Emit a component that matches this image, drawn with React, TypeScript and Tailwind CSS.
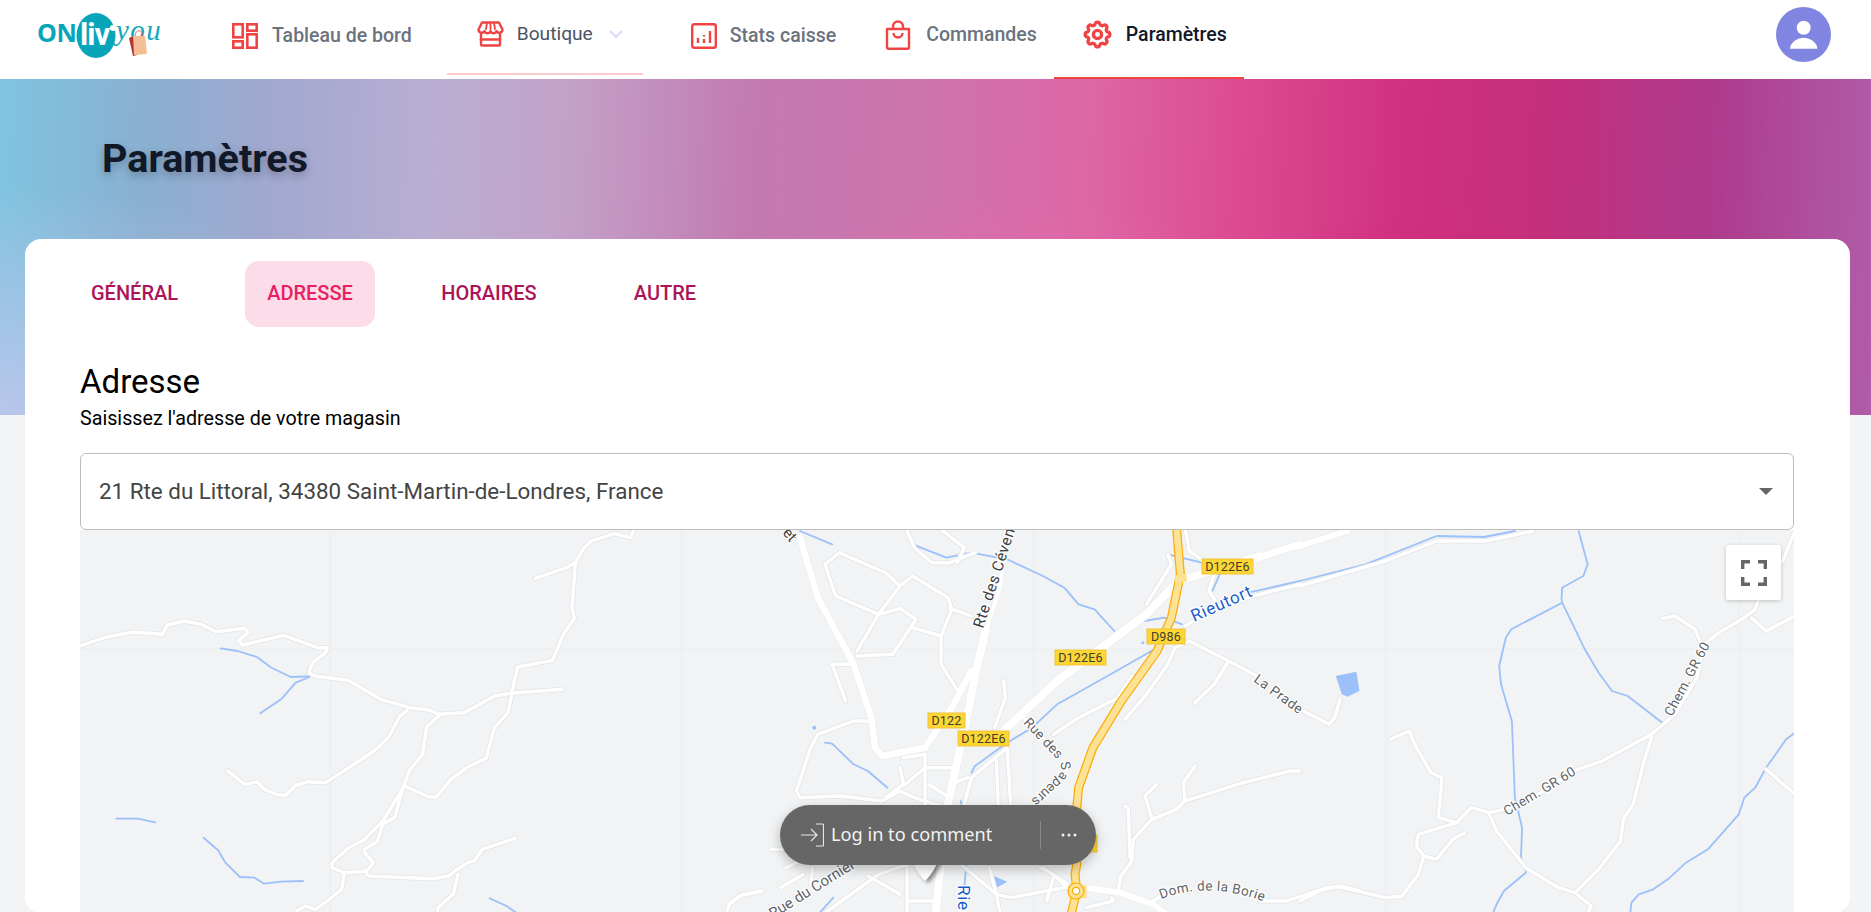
import React from "react";
import { HiOutlineCog } from "react-icons/hi";

type Pts = string;
const conv = (s: Pts, ox: number, oy: number, sx: number, sy: number) =>
  s.trim().split(/\s+/).map((p) => {
    const [x, y] = p.split(",").map(Number);
    return `${(ox + x / sx - 80).toFixed(1)},${(oy + y / sy - 529).toFixed(1)}`;
  }).join(" ");
const z8 = (s: Pts) => conv(s, 0, 520, 2.063, 3);
const z5 = (s: Pts) => conv(s, 700, 520, 2.8, 3);
const z6 = (s: Pts) => conv(s, 1000, 520, 3, 3);
const z7 = (s: Pts) => conv(s, 1300, 520, 2.746, 3);
const z11 = (s: Pts) => conv(s, 1040, 700, 3, 3);
const z12 = (s: Pts) => conv(s, 770, 790, 3, 3);

const thin: string[] = [
  ...[
    "165,375 215,350 275,333 335,340 345,312 380,300 415,310 445,332 505,322 512,335 492,358 500,372 550,355 585,343 655,380 675,380 672,395 645,425 637,455 650,465 718,478 785,535 845,560 885,567 905,580 958,575 1020,525 1055,517 1160,505",
    "1055,517 1068,438 1140,418 1162,340 1185,292 1180,260 1187,125 1205,80 1220,60 1268,38 1300,50 1307,30",
    "1187,125 1168,140 1105,172",
    "905,585 880,618 872,700 845,748 830,805 815,888 790,910 778,962 752,985 752,995 770,1025 755,1052 760,1065 895,1073 925,1065 940,1048 965,1025 980,1018 995,985 1063,952",
    "1055,525 1048,575 1020,620 1003,712 965,738 930,775 900,828 885,828 835,795",
    "840,568 825,585 802,648 772,690 672,785 635,782 610,793 590,822 575,822 545,805 530,782 505,790 470,750",
    "830,805 790,900 750,958 718,982 685,1025 685,1040 710,1055 755,1050",
    "710,1060 705,1105 680,1135 650,1165 630,1155 612,1170",
    "945,1060 935,1120 903,1160 903,1180",
    "1500,1170 1505,1150 1530,1122 1568,1110",
  ].map(z8),
  ...[
    "350,130 390,95 520,155 560,195 595,165 695,230 705,265 675,345 675,430 725,515",
    "560,195 500,280 440,390",
    "350,130 380,225 500,280 560,262 605,295 540,400 440,405",
    "595,320 675,345",
    "700,262 760,285",
    "370,430 430,430",
    "370,430 408,540",
    "480,600 430,600 330,640 310,680 270,810 280,830 390,825 510,840 560,810 600,830 690,860",
    "560,740 570,790 520,830",
    "630,740 720,740",
    "570,710 630,700 630,850",
    "575,790 630,740",
    "640,790 700,830",
    "700,790 750,770",
    "740,850 760,770 860,680 870,850",
    "830,720 835,850",
    "850,480 855,530 825,620",
    "905,590 960,650",
    "990,640 1060,590 1170,530 1210,465",
    "1190,595 1250,520 1310,430 1330,380 1370,360 1480,420 1560,465",
    "1480,420 1440,490 1385,545",
    "1250,250 1320,130 1310,100",
    "1360,30 1370,90 1405,115",
    "1440,160 1425,210 1450,250",
    "580,30 600,80 650,125 700,125 770,95",
    "680,30 740,80 720,125",
    "850,100 855,30",
    "80,1150 110,1125 175,1110",
    "225,1100 290,1060",
    "240,1040 320,1000",
    "315,1040 310,1090",
    "350,1176 500,1060 580,1030",
    "470,1065 560,1120",
    "580,1030 580,1176",
    "580,1140 660,1140",
    "730,1030 830,1120 870,1130 1020,1100",
    "830,1120 840,1176",
    "810,1040 830,1120",
    "960,1040 1030,1090",
    "200,985 230,985",
  ].map(z5),
  ...[
    "1110,370 1150,335 1220,290 1250,265 1270,200 1325,120 1359,30",
    "1240,290 1280,330 1359,285",
    "1100,365 1085,325 1030,285 995,293",
    "1110,370 1090,470 1030,580 965,640 830,720 750,750 640,830 560,865 520,875 470,860 430,905 325,940 320,975 340,1005 325,1060 280,1125 235,1130 105,1097 70,1100 0,1140",
    "965,650 945,720 915,850 888,895 880,960 820,1045 760,1110",
    "520,880 540,930 620,1040 710,1100 755,1115 800,1155 790,1176",
    "1280,745 1359,820",
    "340,1005 375,1015 420,955 452,935",
    "430,905 380,890 390,770 360,755 315,670 300,630 248,655",
    "0,565 80,610 95,590 110,535",
    "0,195 235,120 375,60 510,60 640,30",
  ].map(z7),
  ...[
    "335,350 315,285 350,250",
    "435,300 430,245 465,195",
    "270,470 265,320 255,315",
    "235,570 240,530 275,480 280,415 335,355 410,325 435,300 610,245 750,210 780,210",
    "340,600 380,575",
    "660,600 740,600 830,570 900,555 960,570",
    "0,500 40,520 80,560",
    "40,530 20,600",
    "140,620 220,600 215,590",
  ].map(z11),
  z6("555,315 640,265 760,225 900,190"),
];

const thick: [string, number][] = [
  [z5("800,330 775,440 745,600 690,870 660,1176"), 8],
  [z5("800,330 840,200 850,100"), 4],
  [z5("280,50 330,230 430,430 480,590 490,680 510,705 630,680 700,570 760,450"), 6.5],
  [z5("830,650 1000,480 1250,280 1340,180 1430,150 1568,105"), 8],
  [z6("760,115 900,70"), 7],
  [z7("0,75 130,30"), 6],
  [z11("140,560 240,575 340,610 380,640"), 6],
];

const rivers: string[] = [
  ...[
    "455,382 490,390 530,408 560,440 600,468 638,466",
    "638,468 610,485 580,535 537,577",
    "240,893 285,893 320,904",
    "420,950 450,988 465,1025 495,1068 525,1070 545,1088 580,1082 625,1080",
    "1010,1132 1045,1155 1065,1175",
  ].map(z8),
  ...[
    "280,30 370,70",
    "595,70 690,110 760,95 860,115 960,165 1020,200 1060,250 1105,265 1160,330",
    "1280,380 1150,460 1000,550 930,620 860,665 770,735 760,755",
    "350,665 370,668 430,730 470,750 525,800",
    "1245,300 1300,290 1350,310",
    "1310,100 1405,125",
    "1455,160 1435,210",
    "1360,310 1440,260 1568,215",
    "730,840 735,860",
    "745,1035 740,1100",
  ].map(z5),
  z6("745,215 900,180"),
  ...[
    "0,180 180,130 375,45 505,48 590,30",
    "765,30 790,130 778,165 720,200 718,235 720,245 580,325 565,350 547,435 552,490 582,600 590,830 610,920 607,1010 620,1050",
    "620,1055 560,1110 540,1150 530,1176",
    "720,245 780,380 820,455 857,510 900,525 995,605",
    "1359,635 1335,655 1280,740 1250,800 1220,830 1205,880 1120,985 1060,1025 1010,1075 970,1105 930,1120 910,1145 907,1176",
  ].map(z7),
  z12("190,320 140,375"),
];

const hx = (x: number) => x - 80;
const hy = (y: number) => y - 529;
const Shield = ({ x, y, w, t }: { x: number; y: number; w: number; t: string }) => (
  <g>
    <rect x={hx(x)} y={hy(y)} width={w} height={15} fill="#fdd633" stroke="#f0c33c" strokeWidth={1} />
    <text x={hx(x) + w / 2} y={hy(y) + 12} textAnchor="middle" fontSize={12.5} fill="#3c3c32" letterSpacing={0.2}>{t}</text>
  </g>
);
const halo = { paintOrder: "stroke" as const, stroke: "#ffffff", strokeWidth: 2.5, strokeLinejoin: "round" as const };
const pt = (s: string) => s.split(",").map(Number);

const MapDrawing = () => (
  <svg width={1714} height={383} viewBox="0 0 1714 383" className="block" style={{ fontFamily: "Roboto, sans-serif" }}>
    <rect width={1714} height={383} fill="#f1f3f4" />
    {[250.6, 602, 954, 1306, 1659].map((x) => (
      <line key={x} x1={x} x2={x} y1={0} y2={383} stroke="#ecedef" strokeWidth={1} />
    ))}
    <line x1={0} x2={1714} y1={119} y2={119} stroke="#ecedef" strokeWidth={1} />
    <polygon points={z7("98,465 155,452 163,510 130,527 115,520")} fill="#9cc0f9" />
    <circle cx={pt(z5("320,620"))[0]} cy={pt(z5("320,620"))[1]} r={2} fill="#9cc0f9" />
    <circle cx={pt(z5("1240,365"))[0]} cy={pt(z5("1240,365"))[1]} r={1.5} fill="#9cc0f9" />
    <polygon points={z12("672,255 712,272 680,290")} fill="#9cc0f9" />
    <g fill="none" strokeLinejoin="round" strokeLinecap="round">
      {rivers.map((p, i) => <polyline key={i} points={p} stroke="#9cc0f9" strokeWidth={1.8} />)}
      {thin.map((p, i) => <polyline key={i} points={p} stroke="#e3e5e8" strokeWidth={5} />)}
      {thick.map(([p, w], i) => <polyline key={i} points={p} stroke="#e8eaed" strokeWidth={w + 1} />)}
      {thin.map((p, i) => <polyline key={i} points={p} stroke="#ffffff" strokeWidth={3.4} />)}
      {thick.map(([p, w], i) => <polyline key={i} points={p} stroke="#ffffff" strokeWidth={w} />)}
      <polyline points={z5("1335,30 1345,160 1320,290 1280,390 1180,540 1100,680 1060,800 1055,860 1055,1030 1050,1060 1055,1110 1040,1176")} stroke="#f9ab00" strokeWidth={9} />
      <polyline points={z5("1335,30 1345,160 1320,290 1280,390 1180,540 1100,680 1060,800 1055,860 1055,1030 1050,1060 1055,1110 1040,1176")} stroke="#fde293" strokeWidth={6.6} />
      <polyline points={z6("525,175 560,170")} stroke="#fde293" strokeWidth={8} strokeLinecap="butt" />
      <polyline points={z11("85,572 140,572")} stroke="#fde293" strokeWidth={13} strokeLinecap="butt" />
      <circle cx={hx(1076)} cy={hy(890)} r={8} fill="#fde293" stroke="#f9ab00" strokeWidth={1.2} />
      <circle cx={hx(1076)} cy={hy(890)} r={3.6} fill="#ffffff" stroke="#f9ab00" strokeWidth={1.2} />
    </g>
    <text transform={`translate(${hx(782)} ${hy(532)}) rotate(50)`} fontSize={15} fill="#3c4043" style={halo}>et</text>
    <text transform={`translate(${hx(983)} ${hy(628)}) rotate(-72)`} fontSize={15.5} fill="#3c4043" style={halo} letterSpacing={0.5}>Rte des Cévennes</text>
    <text transform={`translate(${hx(1194)} ${hy(621)}) rotate(-24)`} fontSize={17} fill="#1a5cc8" style={halo} letterSpacing={0.7}>Rieutort</text>
    <text transform={`translate(${hx(958)} ${hy(884)}) rotate(90)`} fontSize={17} fill="#1a5cc8" style={halo} letterSpacing={0.7}>Rieutort</text>
    <text transform={`translate(${hx(1253)} ${hy(680)}) rotate(36)`} fontSize={13.5} fill="#5f6368" style={halo} letterSpacing={0.5}>La Prade</text>
    <text transform={`translate(${hx(1507)} ${hy(815)}) rotate(-31)`} fontSize={13.5} fill="#5f6368" style={halo} letterSpacing={0.3}>Chem. GR 60</text>
    <text transform={`translate(${hx(1672)} ${hy(716)}) rotate(-62)`} fontSize={13.5} fill="#5f6368" style={halo} letterSpacing={0.3}>Chem. GR 60</text>
    <text transform={`translate(${hx(856)} ${hy(866)}) rotate(-32)`} textAnchor="end" fontSize={15} fill="#5f6368" style={halo}>Rue du Cornier</text>
    <defs>
      <path id="borie" d={`M${hx(1161)} ${hy(898)} Q${hx(1212)} ${hy(878)} ${hx(1275)} ${hy(905)}`} />
      <path id="sapeurs" d={`M${hx(1023)} ${hy(722)} L${hx(1056)} ${hy(757)} Q${hx(1068)} ${hy(770)} ${hx(1052)} ${hy(780)} L${hx(1022)} ${hy(808)}`} />
    </defs>
    <text fontSize={13.5} fill="#5f6368" style={halo} letterSpacing={0.4}><textPath href="#borie">Dom. de la Borie</textPath></text>
    <text fontSize={13.5} fill="#5f6368" style={halo} letterSpacing={0.3}><textPath href="#sapeurs">Rue des Sapeurs</textPath></text>
    <Shield x={1202} y={558} w={51} t="D122E6" />
    <Shield x={1055} y={649} w={51} t="D122E6" />
    <Shield x={958} y={730} w={51} t="D122E6" />
    <Shield x={928} y={712} w={37} t="D122" />
    <Shield x={1147} y={628} w={38} t="D986" />
    <rect x={hx(1085)} y={hy(834)} width={12} height={17} fill="#fdd633" stroke="#f0c33c" />
    <path d={`M${hx(906)} ${hy(845)} L${hx(944)} ${hy(845)} Q${hx(936)} ${hy(870)} ${hx(925)} ${hy(880)} Q${hx(914)} ${hy(870)} ${hx(906)} ${hy(845)} Z`} fill="#ffffff" style={{ filter: "drop-shadow(3px 2px 2px rgba(0,0,0,0.45))" }} />
  </svg>
);

const ICON = "#ef4444";
const IDash = () => (
  <svg width="26" height="26" viewBox="0 0 26 26" fill="none" stroke={ICON} strokeWidth="2.6">
    <rect x="1.3" y="1.3" width="9.4" height="13" /><rect x="15.3" y="1.3" width="9.4" height="6.4" />
    <rect x="1.3" y="18.3" width="9.4" height="6.4" /><rect x="15.3" y="11.3" width="9.4" height="13.4" />
  </svg>
);
const IStore = () => (
  <svg width="27" height="26" viewBox="0 0 27 26" fill="none" stroke={ICON} strokeWidth="2.4" strokeLinejoin="round" strokeLinecap="round">
    <path d="M4 13v10.500a1 1 0 0 0 1 1h17a1 1 0 0 0 1-1V13" />
    <path d="M5 1.500h17l3.500 7a3.200 3.200 0 0 1-6 1.600 3.200 3.200 0 0 1-6 0 3.200 3.200 0 0 1-6 0 3.200 3.200 0 0 1-6-1.600z" />
    <path d="M10 2l-1 6M17 2l1 6M13.500 2v6" strokeWidth="1.8" />
    <path d="M4 18.500h19" />
  </svg>
);
const IStats = () => (
  <svg width="26" height="26" viewBox="0 0 26 26" fill="none" stroke={ICON} strokeWidth="2.4">
    <rect x="1.2" y="1.2" width="23.6" height="23.6" rx="2" />
    <path d="M7 15v5M13 12v1.500M13 16v4M19 8v12" strokeWidth="2.4" />
  </svg>
);
const IBag = () => (
  <svg width="26" height="30" viewBox="0 0 26 30" fill="none" stroke={ICON} strokeWidth="2.4" strokeLinejoin="round">
    <path d="M2 9h22v18.500a1.200 1.200 0 0 1-1.200 1.200H3.200A1.200 1.200 0 0 1 2 27.500z" />
    <path d="M8 9V6.500a5 5 0 0 1 10 0V9" />
    <path d="M8.500 13a4.500 4.500 0 0 0 9 0" />
  </svg>
);
const IUser = () => (
  <svg width="55" height="55" viewBox="0 0 55 55">
    <circle cx="27.5" cy="27.5" r="27.5" fill="#7f85e0" />
    <circle cx="27.7" cy="20.7" r="7" fill="#ffffff" />
    <path d="M14 41.700c0-6.500 8-11 13.700-11s13.700 4.500 13.700 11z" fill="#ffffff" />
  </svg>
);
const Logo = () => (
  <svg width="135" height="58" viewBox="0 0 135 58" style={{ fontFamily: "'Open Sans', sans-serif" }}>
    <ellipse cx="61" cy="27.500" rx="19.500" ry="22.500" fill="#08a5ba" />
    <text x="2" y="33.500" fontSize="25" fontWeight="700" fill="#08a5ba" letterSpacing="-0.5">ON</text>
    <text x="45" y="37" fontSize="31" fontWeight="700" fill="#ffffff" letterSpacing="-1" style={{ fontFamily: "'Roboto', sans-serif" }}>liv</text>
    <circle cx="78" cy="20" r="3" fill="#ffffff" />
    <text x="81" y="32" fontSize="29" fontStyle="italic" fill="#12a9bb" letterSpacing="1.5" style={{ fontFamily: "'Liberation Serif', serif" }}>you</text>
    <path d="M94 30l5-2 3 19-4 1z" fill="#b3312f" />
    <path d="M98 28h12l2 18-13 1z" fill="#f5bd93" />
    <path d="M100 28c0-7 8-7 8 0" fill="none" stroke="#e8697a" strokeWidth="1" />
  </svg>
);

const navText = "text-[19.5px] font-medium leading-none";

export default function App() {
  return (
    <div className="h-[912px] overflow-hidden bg-[#f3f4f6] font-['Roboto',sans-serif]">
      <header className="h-[79px] bg-white flex items-start">
        <div className="w-[202px] pl-[35px] pt-[8px] shrink-0"><Logo /></div>
        <a className="h-[79px] pl-[30px] pr-[17px] flex items-center gap-[14px] text-[#6b7280] pb-[8px]">
          <IDash /><span className={navText}>Tableau de bord</span>
        </a>
        <a className="h-[75px] mx-[18px] pl-[30px] pr-[20px] flex items-center gap-[13px] text-[#4b5563] border-b-2 border-[#fecaca] pb-[6px]">
          <IStore /><span className="text-[19.2px] leading-none">Boutique</span>
          <svg width="14" height="8" viewBox="0 0 14 8" fill="none" stroke="#ddd6fe" strokeWidth="2" className="ml-[3px]"><path d="M1 1l6 6 6-6" /></svg>
        </a>
        <a className="h-[79px] pl-[30px] pr-[19px] flex items-center gap-[13px] text-[#6b7280] pb-[8px]">
          <IStats /><span className={navText}>Stats caisse</span>
        </a>
        <a className="h-[79px] pl-[30px] pr-[17px] flex items-center gap-[15px] text-[#6b7280] pb-[9px]">
          <IBag /><span className={navText}>Commandes</span>
        </a>
        <a className="h-[79px] pl-[27px] pr-[17px] flex items-center gap-[12px] text-[#111827] border-b-2 border-[#ef4444] pb-[8px]">
          <HiOutlineCog size={33} color={ICON} strokeWidth={2.4} /><span className={navText}>Paramètres</span>
        </a>
        <div className="ml-auto mr-[40px] mt-[7px]"><IUser /></div>
      </header>

      <section className="h-[336px] pl-[102px] pt-[55px] bg-[radial-gradient(ellipse_420px_230px_at_0%_100%,#b9c6ea_0%,rgba(185,198,234,0)_100%),radial-gradient(ellipse_300px_170px_at_54%_85%,rgba(230,108,170,0.85)_0%,rgba(230,108,170,0)_100%),radial-gradient(ellipse_220px_180px_at_77%_90%,rgba(205,45,115,0.8)_0%,rgba(205,45,115,0)_100%),linear-gradient(92deg,#7fc4e1_0%,#8aafd0_8%,#a3a8cf_15%,#b9aed2_23%,#c3a2c9_30%,#c27ab0_40%,#cf73ae_50%,#dd66a6_58%,#dc4a92_66%,#d03080_75%,#c42f7c_82%,#ae3a8c_91%,#b05ca8_100%)]">
        <h1 className="text-[39.5px] font-bold leading-[50px] text-[#111827] [text-shadow:0_4px_8px_rgba(0,0,0,0.25)]">Paramètres</h1>
      </section>

      <main className="relative ml-[25px] mr-[21px] -mt-[176px] bg-white rounded-[16px] pt-[22px]">
        <nav className="flex pl-[44px] text-[20px] font-medium text-[#ad1457]">
          <button className="h-[66px] w-[131px] pb-[3px] rounded-[14px]">GÉNÉRAL</button>
          <button className="h-[66px] w-[130px] pb-[3px] ml-[45px] rounded-[14px] bg-[#fcdce8] text-[#e91e63]">ADRESSE</button>
          <button className="h-[66px] w-[140px] pb-[3px] ml-[44px] rounded-[14px]">HORAIRES</button>
          <button className="h-[66px] w-[106px] pb-[3px] ml-[53px] rounded-[14px]">AUTRE</button>
        </nav>
        <div className="pl-[55px] pr-[56px] pt-[35px]">
          <h2 className="text-[33px] leading-[40px] text-black">Adresse</h2>
          <p className="text-[19.7px] leading-[24px] mt-[5px] text-black">Saisissez l'adresse de votre magasin</p>
          <div className="mt-[22px] h-[77px] border border-[#bdbdbd] rounded-[6px] flex items-center justify-between pl-[18px] pr-[20px]">
            <span className="text-[22.4px] text-[#444444]">21 Rte du Littoral, 34380 Saint-Martin-de-Londres, France</span>
            <svg width="14" height="7" viewBox="0 0 14 7"><path d="M0 0h14L7 7z" fill="#666666" /></svg>
          </div>
          <div className="relative">
            <MapDrawing />
            <button className="absolute left-[1646px] top-[15px] w-[55px] h-[55px] rounded-[2px] bg-white shadow-[0_1px_4px_rgba(0,0,0,0.2)] flex items-center justify-center">
              <svg width="26" height="26" viewBox="0 0 26 26" fill="none" stroke="#666666" strokeWidth="3.4"><path d="M1.700 9V1.700H9M17 1.700h7.300V9M24.300 17v7.300H17M9 24.300H1.700V17" /></svg>
            </button>
            <div className="absolute left-[700px] top-[275px] w-[316px] h-[60px] rounded-[30px] bg-[#666666] shadow-[0_4px_12px_rgba(0,0,0,0.25)] flex items-center pl-[21px] text-white font-['Noto_Sans',sans-serif]">
              <svg width="23" height="24" viewBox="0 0 23 24" fill="none" stroke="#e6e6e6" strokeWidth="1.200"><path d="M15 1h6.500a1 1 0 0 1 1 1v20a1 1 0 0 1-1 1H15M0 12h16M10 6l6 6-6 6" /></svg>
              <span className="ml-[7px] w-[209px] text-[18.2px] text-[#f2f2f2]">Log in to comment</span>
              <span className="h-[28px] w-px bg-[#888888]" />
              <svg width="16" height="4" viewBox="0 0 16 4" className="ml-[20px]" fill="#f0f0f0"><circle cx="2" cy="2" r="1.500" /><circle cx="8" cy="2" r="1.500" /><circle cx="14" cy="2" r="1.500" /></svg>
            </div>
          </div>
        </div>
      </main>
    </div>
  );
}
